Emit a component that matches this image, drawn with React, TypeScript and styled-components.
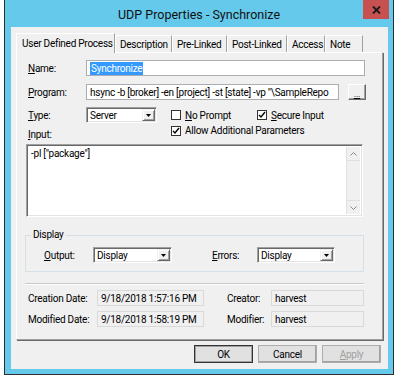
import React from 'react'
import styled, { createGlobalStyle } from 'styled-components'

const GlobalStyle = createGlobalStyle`
  html, body {
    margin: 0;
    padding: 0;
    background: #ffffff;
  }
  body {
    font-family: Roboto, "Noto Sans", sans-serif;
    font-size: 10px;
    letter-spacing: -0.25px;
    color: #000000;
  }
`

const Window = styled.div`
  margin-left: 4px;
  width: 388px;
  height: 374px;
  background: #65c9eb;
  border: 1px solid #2e2e2e;
  border-top: none;
  display: flex;
  flex-direction: column;
`

const TitleBar = styled.div`
  height: 27px;
  display: grid;
  grid-template-columns: 1fr auto 1fr;
  align-items: start;
`

const Title = styled.div`
  grid-column: 2;
  padding-top: 6px;
  font-size: 12.5px;
  letter-spacing: 0;
  line-height: 18px;
  color: #111111;
`

const CloseButton = styled.div`
  grid-column: 3;
  justify-self: end;
  margin-right: 4px;
  width: 26px;
  height: 19px;
  background: #c75050;
  display: flex;
  align-items: center;
  justify-content: center;
`

const Client = styled.div`
  flex: 1;
  margin: 0 5px 5px 6px;
  background: #f0f0f0;
  padding: 6px 6px 0 5px;
  display: flex;
  flex-direction: column;
`

const TabStrip = styled.div`
  display: flex;
  align-items: flex-end;
  height: 19px;
`

const Tab = styled.div<{ $w: number; $active?: boolean }>`
  width: ${(p) => p.$w}px;
  height: ${(p) => (p.$active ? 20 : 17)}px;
  box-sizing: border-box;
  border-top: 1px solid #ffffff;
  border-left: 1px solid #ffffff;
  border-right: 1px solid #a0a0a0;
  padding-left: ${(p) => (p.$active ? 5 : 4)}px;
  display: flex;
  align-items: center;
  white-space: nowrap;
  background: #f0f0f0;
  position: relative;
  margin-bottom: ${(p) => (p.$active ? -1 : 0)}px;
  z-index: ${(p) => (p.$active ? 1 : 0)};
`

const TabPage = styled.div`
  width: 367px;
  height: 288px;
  box-sizing: border-box;
  border-top: 1px solid #ffffff;
  border-left: 1px solid #ffffff;
  border-right: 1px solid #a0a0a0;
  border-bottom: 1px solid #a0a0a0;
  box-shadow: 1px 1px 0 #696969;
  display: flex;
  flex-direction: column;
`

const Row = styled.div<{ $top: number; $left?: number; $h?: number }>`
  display: flex;
  align-items: center;
  margin-top: ${(p) => p.$top}px;
  margin-left: ${(p) => p.$left ?? 11}px;
  height: ${(p) => p.$h ?? 16}px;
`

const Label = styled.div<{ $w: number; $gap?: number }>`
  width: ${(p) => p.$w}px;
  margin-left: ${(p) => p.$gap ?? 0}px;
  flex-shrink: 0;
  white-space: nowrap;
`

const BottomLabel = styled(Label)`
  align-self: flex-end;
`

const TextField = styled.div<{ $w: number }>`
  width: ${(p) => p.$w}px;
  height: 16px;
  box-sizing: border-box;
  background: #ffffff;
  border: 1px solid #abadb3;
  display: flex;
  align-items: center;
  padding-left: 3px;
  white-space: nowrap;
  overflow: hidden;
`

const Selected = styled.span`
  background: #3399ff;
  color: #ffffff;
  padding: 0 1px;
  line-height: 13px;
`

const SmallButton = styled.div`
  margin-left: 9px;
  width: 18px;
  height: 16px;
  box-sizing: border-box;
  background: #f0f0f0;
  border: 1px solid;
  border-color: #ffffff #696969 #696969 #ffffff;
  box-shadow: inset -1px -1px 0 #a0a0a0;
  display: flex;
  align-items: flex-end;
  justify-content: center;
  font-size: 9px;
  line-height: 10px;
  text-decoration: underline;
`

const SelectBox = styled.div<{ $w: number }>`
  width: ${(p) => p.$w}px;
  height: 16px;
  box-sizing: border-box;
  background: #ffffff;
  border: 1px solid;
  border-color: #a0a0a0 #ffffff #ffffff #a0a0a0;
  box-shadow: inset 1px 1px 0 #696969, inset -1px -1px 0 #e3e3e3;
  display: flex;
  align-items: stretch;
  flex-shrink: 0;
`

const SelectValue = styled.div`
  flex: 1;
  padding-left: 3px;
  display: flex;
  align-items: center;
  white-space: nowrap;
`

const ArrowButton = styled.div`
  width: 13px;
  margin: 1px 1px 1px 0;
  box-sizing: border-box;
  background: #f0f0f0;
  border: 1px solid;
  border-color: #f0f0f0 #696969 #696969 #f0f0f0;
  box-shadow: inset 1px 1px 0 #ffffff, inset -1px -1px 0 #a0a0a0;
  display: flex;
  align-items: center;
  justify-content: center;
`

const Check = styled.div<{ $left: number; $w?: number }>`
  display: flex;
  align-items: center;
  gap: 4px;
  margin-left: ${(p) => p.$left}px;
  width: ${(p) => (p.$w ? `${p.$w}px` : 'auto')};
  flex-shrink: 0;
  white-space: nowrap;
`

const CheckTop = styled(Check)`
  align-self: flex-start;
  margin-top: 1px;
`

const CheckBox = styled.div`
  width: 10px;
  height: 10px;
  box-sizing: border-box;
  background: #ffffff;
  border: 1px solid #333333;
  display: flex;
  align-items: center;
  justify-content: center;
`

const TextArea = styled.div`
  margin: 4px 0 0 9px;
  width: 337px;
  height: 73px;
  box-sizing: border-box;
  background: #ffffff;
  border: 1px solid;
  border-color: #a0a0a0 #ffffff #ffffff #a0a0a0;
  box-shadow: inset 1px 1px 0 #696969, inset -1px -1px 0 #e3e3e3;
  display: flex;
`

const TextBody = styled.div`
  flex: 1;
  padding: 3px 4px;
`

const ScrollBar = styled.div`
  width: 13px;
  margin: 2px 2px 2px 0;
  background: #f0f0f0;
  border-left: 1px solid #e0e0e0;
  display: flex;
  flex-direction: column;
  justify-content: space-between;
`

const ScrollArrow = styled.div`
  height: 13px;
  display: flex;
  align-items: center;
  justify-content: center;
  border-bottom: 1px solid #e0e0e0;
  &:last-child {
    border-bottom: none;
    border-top: 1px solid #e0e0e0;
  }
`

const GroupBox = styled.fieldset`
  margin: 12px 0 0 8px;
  width: 339px;
  box-sizing: border-box;
  padding: 6px 0 8px 0;
  border: 1px solid #d5dfe5;
  border-radius: 0;
  min-width: 0;
`

const Legend = styled.legend`
  margin-left: 5px;
  padding: 0 2px;
  line-height: 12px;
`

const GroupRow = styled.div`
  display: flex;
  align-items: center;
  height: 16px;
  padding-left: 18px;
`

const Separator = styled.div`
  margin: 11px 0 0 8px;
  width: 339px;
  height: 0;
  border-top: 1px solid #c8c8c8;
  border-bottom: 1px solid #ffffff;
`

const ReadOnlyField = styled.div<{ $w: number }>`
  width: ${(p) => p.$w}px;
  height: 16px;
  box-sizing: border-box;
  background: #f0f0f0;
  border: 1px solid #d9d9d9;
  display: flex;
  align-items: center;
  padding-left: 3px;
  white-space: nowrap;
  flex-shrink: 0;
`

const ButtonRow = styled.div`
  display: flex;
  justify-content: flex-end;
  gap: 5px;
  margin-top: 5px;
  padding-right: 1px;
`

const DialogButton = styled.div<{ $default?: boolean; $disabled?: boolean }>`
  width: 59px;
  height: 18px;
  box-sizing: border-box;
  background: #e1e1e1;
  border: 1px solid ${(p) => (p.$default ? '#333333' : '#adadad')};
  box-shadow: ${(p) => (p.$default ? 'inset 0 0 0 1px #a0a0a0' : 'inset -1px -1px 0 #a0a0a0')};
  color: ${(p) => (p.$disabled ? '#a0a0a0' : '#000000')};
  display: flex;
  align-items: center;
  justify-content: center;
`

const Triangle = () => (
  <svg width="5" height="3" viewBox="0 0 5 3">
    <path d="M0 0h5L2.5 3z" fill="#000" />
  </svg>
)

const Select: React.FC<{ w: number; value: string }> = ({ w, value }) => (
  <SelectBox $w={w}>
    <SelectValue>{value}</SelectValue>
    <ArrowButton>
      <Triangle />
    </ArrowButton>
  </SelectBox>
)

const Tick = () => (
  <svg width="8" height="8" viewBox="0 0 8 8">
    <path d="M1 4l2 2 4-5" fill="none" stroke="#000" strokeWidth="1.4" />
  </svg>
)

const tabs = [
  { label: 'User Defined Process', w: 99, active: true },
  { label: 'Description', w: 57 },
  { label: 'Pre-Linked', w: 55 },
  { label: 'Post-Linked', w: 60 },
  { label: 'Access', w: 38 },
  { label: 'Note', w: 38 },
]

const App: React.FC = () => {
  return (
    <>
      <GlobalStyle />
      <Window>
        <TitleBar>
          <Title>UDP Properties - Synchronize</Title>
          <CloseButton>
            <svg width="9" height="8" viewBox="0 0 9 8">
              <path d="M1 0.5l7 7M8 0.5l-7 7" stroke="#1a1a1a" strokeWidth="1.8" />
            </svg>
          </CloseButton>
        </TitleBar>
        <Client>
          <TabStrip>
            {tabs.map((t) => (
              <Tab key={t.label} $w={t.w} $active={t.active}>
                {t.label}
              </Tab>
            ))}
          </TabStrip>
          <TabPage>
            <Row $top={7}>
              <Label $w={58}>
                <u>N</u>ame:
              </Label>
              <TextField $w={279}>
                <Selected>Synchronize</Selected>
              </TextField>
            </Row>
            <Row $top={8}>
              <Label $w={58}>
                <u>P</u>rogram:
              </Label>
              <TextField $w={253}>hsync -b [broker] -en [project] -st [state] -vp "\SampleRepo</TextField>
              <SmallButton>...</SmallButton>
            </Row>
            <Row $top={7}>
              <Label $w={58}>
                <u>T</u>ype:
              </Label>
              <Select w={71} value="Server" />
              <Check $left={14} $w={86}>
                <CheckBox />
                <span>
                  <u>N</u>o Prompt
                </span>
              </Check>
              <Check $left={0}>
                <CheckBox>
                  <Tick />
                </CheckBox>
                <span>
                  <u>S</u>ecure Input
                </span>
              </Check>
            </Row>
            <Row $top={1}>
              <BottomLabel $w={143}>
                <u>I</u>nput:
              </BottomLabel>
              <CheckTop $left={0}>
                <CheckBox>
                  <Tick />
                </CheckBox>
                <span>Allow Additional Parameters</span>
              </CheckTop>
            </Row>
            <TextArea>
              <TextBody>-pl ["package"]</TextBody>
              <ScrollBar>
                <ScrollArrow>
                  <svg width="7" height="4" viewBox="0 0 7 4">
                    <path d="M0.5 3.5l3-3 3 3" fill="none" stroke="#888" />
                  </svg>
                </ScrollArrow>
                <ScrollArrow>
                  <svg width="7" height="4" viewBox="0 0 7 4">
                    <path d="M0.5 0.5l3 3 3-3" fill="none" stroke="#888" />
                  </svg>
                </ScrollArrow>
              </ScrollBar>
            </TextArea>
            <GroupBox>
              <Legend>Display</Legend>
              <GroupRow>
                <Label $w={49}>
                  <u>O</u>utput:
                </Label>
                <Select w={79} value="Display" />
                <Label $w={45} $gap={40}>
                  <u>E</u>rrors:
                </Label>
                <Select w={78} value="Display" />
              </GroupRow>
            </GroupBox>
            <Separator />
            <Row $top={5}>
              <Label $w={69}>Creation Date:</Label>
              <ReadOnlyField $w={107}>9/18/2018 1:57:16 PM</ReadOnlyField>
              <Label $w={44} $gap={23}>
                Creator:
              </Label>
              <ReadOnlyField $w={93}>harvest</ReadOnlyField>
            </Row>
            <Row $top={5}>
              <Label $w={69}>Modified Date:</Label>
              <ReadOnlyField $w={107}>9/18/2018 1:58:19 PM</ReadOnlyField>
              <Label $w={44} $gap={23}>
                Modifier:
              </Label>
              <ReadOnlyField $w={93}>harvest</ReadOnlyField>
            </Row>
          </TabPage>
          <ButtonRow>
            <DialogButton $default>OK</DialogButton>
            <DialogButton>Cancel</DialogButton>
            <DialogButton $disabled>
              <u>A</u>pply
            </DialogButton>
          </ButtonRow>
        </Client>
      </Window>
    </>
  )
}

export default App
